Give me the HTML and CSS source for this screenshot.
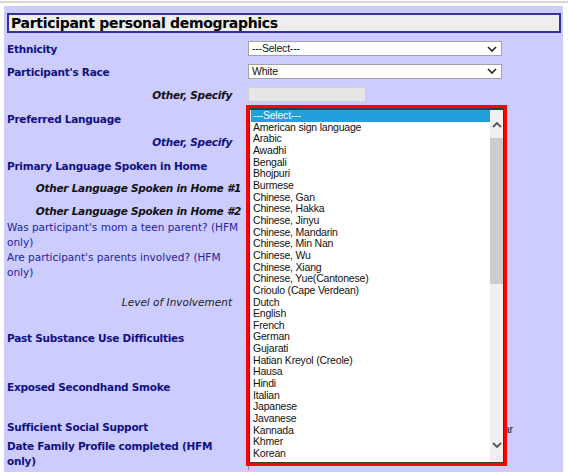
FILE: index.html
```html
<!DOCTYPE html>
<html>
<head>
<meta charset="utf-8">
<link rel="stylesheet" href="styles.css">
</head>
<body>
<div class="topline"></div>
<div class="panel">
  <div class="header">Participant personal demographics</div>
  <div class="rows">
    <div class="row r1">
      <div class="label b">Ethnicity</div>
      <div class="ctrl"><div class="select"><span>---Select---</span><svg class="chev" width="10" height="6" viewBox="0 0 10 6"><path d="M1 1 L5 5 L9 1" fill="none" stroke="#222" stroke-width="1.6"/></svg></div></div>
    </div>
    <div class="row r2">
      <div class="label b">Participant's Race</div>
      <div class="ctrl"><div class="select"><span>White</span><svg class="chev" width="10" height="6" viewBox="0 0 10 6"><path d="M1 1 L5 5 L9 1" fill="none" stroke="#222" stroke-width="1.6"/></svg></div></div>
    </div>
    <div class="row r3">
      <div class="label bi black right pr16">Other, Specify</div>
      <div class="ctrl"><div class="textbox disabled"></div></div>
    </div>
    <div class="row r4">
      <div class="label b">Preferred Language</div>
      <div class="ctrl"></div>
    </div>
    <div class="row r5">
      <div class="label bi right pr16">Other, Specify</div>
      <div class="ctrl"></div>
    </div>
    <div class="row r6">
      <div class="label b">Primary Language Spoken in Home</div>
      <div class="ctrl"></div>
    </div>
    <div class="row r7">
      <div class="label bi black right pr8">Other Language Spoken in Home #1</div>
      <div class="ctrl"></div>
    </div>
    <div class="row r8">
      <div class="label bi black right pr8">Other Language Spoken in Home #2</div>
      <div class="ctrl"></div>
    </div>
    <div class="row r9">
      <div class="label reg">Was participant's mom a teen parent? (HFM only)</div>
      <div class="ctrl"></div>
    </div>
    <div class="row r10">
      <div class="label reg">Are participant's parents involved? (HFM only)</div>
      <div class="ctrl"></div>
    </div>
    <div class="row r11">
      <div class="label it right pr16">Level of Involvement</div>
      <div class="ctrl"></div>
    </div>
    <div class="row r12">
      <div class="label b">Past Substance Use Difficulties</div>
      <div class="ctrl"></div>
    </div>
    <div class="row r13">
      <div class="label b">Exposed Secondhand Smoke</div>
      <div class="ctrl"></div>
    </div>
    <div class="row r14">
      <div class="label b">Sufficient Social Support</div>
      <div class="ctrl"><span class="opt-text">Unclear</span></div>
    </div>
    <div class="row r15">
      <div class="label b narrow">Date Family Profile completed (HFM only)</div>
      <div class="ctrl"><div class="date-edge"></div></div>
    </div>
  </div>

  <div class="dropdown">
    <div class="listbox">
      <div class="options">
        <div class="opt sel">---Select---</div>
        <div class="opt">American sign language</div>
        <div class="opt">Arabic</div>
        <div class="opt">Awadhi</div>
        <div class="opt">Bengali</div>
        <div class="opt">Bhojpuri</div>
        <div class="opt">Burmese</div>
        <div class="opt">Chinese, Gan</div>
        <div class="opt">Chinese, Hakka</div>
        <div class="opt">Chinese, Jinyu</div>
        <div class="opt">Chinese, Mandarin</div>
        <div class="opt">Chinese, Min Nan</div>
        <div class="opt">Chinese, Wu</div>
        <div class="opt">Chinese, Xiang</div>
        <div class="opt">Chinese, Yue(Cantonese)</div>
        <div class="opt">Crioulo (Cape Verdean)</div>
        <div class="opt">Dutch</div>
        <div class="opt">English</div>
        <div class="opt">French</div>
        <div class="opt">German</div>
        <div class="opt">Gujarati</div>
        <div class="opt">Hatian Kreyol (Creole)</div>
        <div class="opt">Hausa</div>
        <div class="opt">Hindi</div>
        <div class="opt">Italian</div>
        <div class="opt">Japanese</div>
        <div class="opt">Javanese</div>
        <div class="opt">Kannada</div>
        <div class="opt">Khmer</div>
        <div class="opt">Korean</div>
      </div>
      <div class="scrollbar">
        <div class="sb-arrow up"><svg width="10" height="6" viewBox="0 0 10 6"><path d="M1 5 L5 1 L9 5" fill="none" stroke="#555" stroke-width="1.8"/></svg></div>
        <div class="sb-thumb"></div>
        <div class="sb-rest"></div>
        <div class="sb-arrow down"><svg width="10" height="6" viewBox="0 0 10 6"><path d="M1 1 L5 5 L9 1" fill="none" stroke="#555" stroke-width="1.8"/></svg></div>
      </div>
    </div>
  </div>
</div>
</body>
</html>
```

FILE: styles.css
```css
html, body {
  margin: 0;
  padding: 0;
  background: #ffffff;
  overflow: hidden;
}

body {
  width: 568px;
  height: 472px;
  font-family: "DejaVu Sans", Verdana, sans-serif;
}

.topline {
  height: 0;
  margin-top: 1px;
  border-top: 2px solid #d6d6d6;
}

.panel {
  position: relative;
  margin: 3px 5px 0 4px;
  padding: 7px 2px 0 3px;
  background: #ccccff;
  height: 470px;
  box-sizing: border-box;
}

.header {
  height: 20px;
  box-sizing: border-box;
  border: 2px solid #333399;
  background: #eeeeee;
  color: #000;
  font-weight: bold;
  font-size: 14px;
  letter-spacing: -0.3px;
  line-height: 16px;
  padding-left: 2px;
  white-space: nowrap;
  overflow: hidden;
}

.rows {
  margin-top: 5px;
  display: flex;
  flex-direction: column;
}

.row {
  display: flex;
  align-items: center;
}

.r1 { height: 23px; }
.r2 { height: 22px; }
.r3 { height: 25px; }
.r4 { height: 22px; }
.r5 { height: 25px; }
.r6 { height: 23px; }
.r7 { height: 20px; }
.r8 { height: 26px; }
.r9 { height: 21px; }
.r10 { height: 40px; }
.r11 { height: 35px; }
.r12 { height: 36px; }
.r13 { height: 62px; }
.r14 { height: 18px; }
.r15 { height: 35px; align-items: flex-start; }

.label {
  width: 241px;
  flex: none;
  box-sizing: border-box;
  font-size: 10.5px;
  letter-spacing: -0.25px;
  line-height: 14.7px;
  color: #10107f;
}

.label.b { font-weight: bold; }
.label.bi { font-weight: bold; font-style: italic; }
.label.reg { font-weight: normal; color: #2323a0; letter-spacing: 0; padding-right: 2px; }
.label.it { font-style: italic; color: #222; letter-spacing: 0; }
.label.black { color: #111; }
.label.right { text-align: right; white-space: nowrap; }
.label.narrow { padding-right: 12px; }
.pr16 { padding-right: 16px; }
.pr8 { padding-right: 7px; }

.r15 .label { padding-top: 3px; }

.ctrl {
  flex: 1;
  display: flex;
  align-items: center;
  font-family: "Liberation Sans", Arial, sans-serif;
  font-size: 10.5px;
  letter-spacing: -0.2px;
}

.select {
  width: 254px;
  height: 15px;
  box-sizing: border-box;
  border: 1px solid #a3a3a3;
  background: #fff;
  display: flex;
  align-items: center;
  justify-content: space-between;
  padding: 0 3px 0 3px;
  color: #111;
  margin-top: -2px;
}

.select span { line-height: 13px; }
.select .chev { margin-right: 1px; }

.textbox {
  width: 118px;
  height: 15px;
  box-sizing: border-box;
  border: 1px solid #d0d0d8;
  background: #fff;
  margin-top: -2px;
}

.textbox.disabled { background: #e6e6e6; }

.date-edge {
  width: 1px;
  height: 12px;
  margin-top: 22px;
  background: #8a8a9a;
}

.opt-text {
  margin-left: 230px;
  color: #111;
  margin-top: 3px;
}

/* open dropdown overlay */
.dropdown {
  position: absolute;
  left: 242px;
  top: 99px;
  width: 261px;
  height: 361px;
  box-sizing: border-box;
  border: 3px solid #ff0000;
  background: #fff;
}

.listbox {
  height: 100%;
  box-sizing: border-box;
  border: 1px solid #3a3a3a;
  border-top-width: 2px;
  display: flex;
  padding: 0 0 0 1px;
  background: #fff;
}

.options {
  flex: 1;
  font-family: "Liberation Sans", Arial, sans-serif;
  font-size: 10.5px;
  letter-spacing: -0.2px;
  color: #111;
}

.opt {
  height: 11.67px;
  line-height: 11.67px;
  padding-left: 2px;
  white-space: nowrap;
}

.opt.sel {
  background: #229fdc;
  color: #fff;
}

.scrollbar {
  width: 13px;
  flex: none;
  background: #f0f0f0;
  display: flex;
  flex-direction: column;
  margin-right: 0;
}

.sb-arrow {
  display: flex;
  justify-content: center;
  align-items: center;
}

.sb-arrow.up { height: 28px; padding-top: 2px; box-sizing: border-box; }
.sb-thumb { height: 146px; background: #cdcdcd; }
.sb-rest { flex: 1; }
.sb-arrow.down { height: 26px; padding-bottom: 8px; box-sizing: border-box; }
```
